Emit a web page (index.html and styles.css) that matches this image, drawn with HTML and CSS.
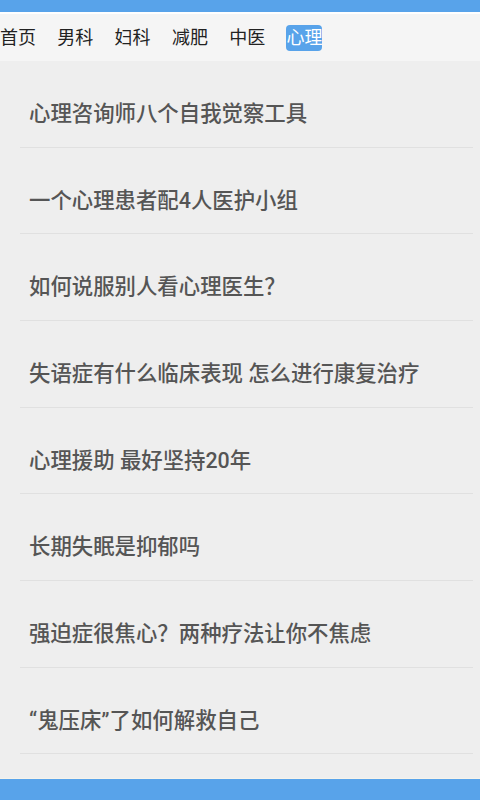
FILE: index.html
```html
<!DOCTYPE html>
<html lang="zh">
<head>
<meta charset="utf-8">
<title>心理</title>
<link rel="stylesheet" href="styles.css">
</head>
<body>
<div class="app">
  <div class="status"></div>
  <nav class="tabs">
    <span class="tab">首页</span>
    <span class="tab">男科</span>
    <span class="tab">妇科</span>
    <span class="tab">减肥</span>
    <span class="tab">中医</span>
    <span class="tab active">心理</span>
  </nav>
  <ul class="list">
    <li class="item">心理咨询师八个自我觉察工具</li>
    <li class="item">一个心理患者配4人医护小组</li>
    <li class="item">如何说服别人看心理医生？</li>
    <li class="item">失语症有什么临床表现 怎么进行康复治疗</li>
    <li class="item">心理援助 最好坚持20年</li>
    <li class="item">长期失眠是抑郁吗</li>
    <li class="item">强迫症很焦心？两种疗法让你不焦虑</li>
    <li class="item"><span class="latin">“</span>鬼压床<span class="latin">”</span>了如何解救自己</li>
  </ul>
  <div class="footer"></div>
</div>
</body>
</html>
```
FILE: styles.css
```css
html, body {
  margin: 0;
  padding: 0;
}
body {
  font-family: "Roboto", "Noto Sans CJK SC", sans-serif;
  background: #eeeeee;
}
.app {
  height: 800px;
  display: flex;
  flex-direction: column;
  overflow: hidden;
}
.status {
  height: 12px;
  background: #58a3ea;
  border-bottom: 2px solid #ffffff;
  flex: none;
}
.tabs {
  flex: none;
  height: 47px;
  background: #f5f5f5;
  display: flex;
  align-items: center;
  gap: 21.3px;
}
.tab {
  width: 36px;
  font-size: 18px;
  line-height: 18px;
  padding: 4px 0;
  color: #222222;
  text-align: center;
  border-radius: 4px;
  white-space: nowrap;
  margin-top: 1px;
}
.tab.active {
  background: #58a3ea;
  color: #ffffff;
}
.list {
  flex: 1;
  list-style: none;
  margin: 0;
  padding: 0;
  background: #eeeeee;
}
.item {
  height: 86.67px;
  box-sizing: border-box;
  margin: 0 7px 0 20px;
  padding: 41px 0 0 9px;
  border-bottom: 1px solid #e0e0e0;
  font-size: 21.4px;
  line-height: 24px;
  font-weight: 500;
  color: #555555;
  white-space: nowrap;
}
.latin {
  font-family: "Roboto", sans-serif;
}
.footer {
  flex: none;
  height: 21px;
  background: #58a3ea;
  border-top: 1px solid #f6f3ea;
}
```
